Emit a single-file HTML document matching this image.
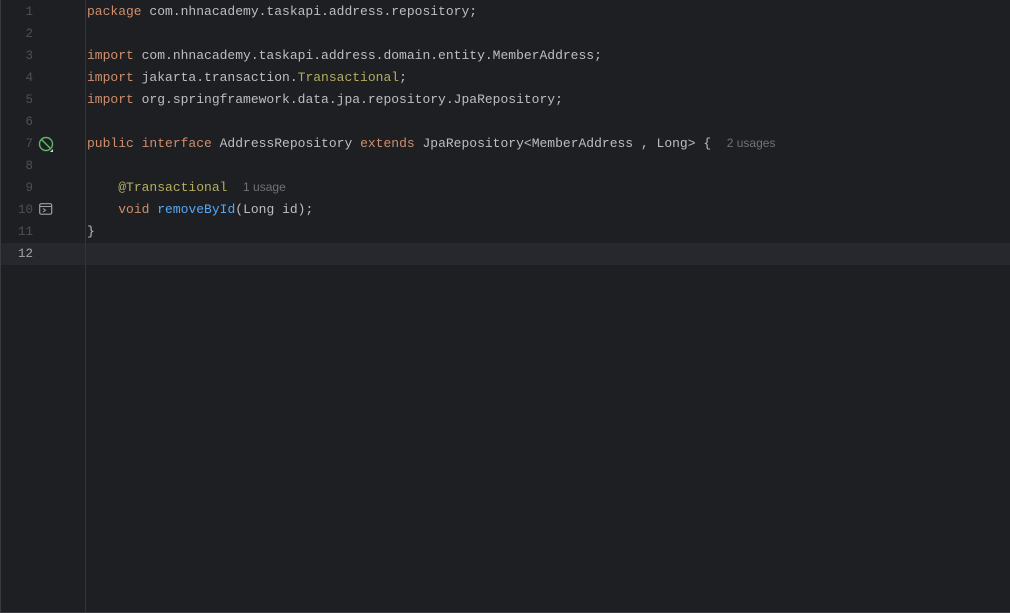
<!DOCTYPE html>
<html><head><style>
html,body{margin:0;padding:0;background:#1e1f22;width:1010px;height:613px;overflow:hidden}
.ed{position:relative;width:1010px;height:613px;background:#1e1f22;border-left:1px solid #393b40;box-sizing:border-box;border-bottom:1px solid #393b40}
.gut{position:absolute;left:84px;top:0;bottom:0;width:1px;background:#313438}
.cur{position:absolute;left:0;right:0;top:243px;height:22px;background:#26282e}
.ln{position:absolute;left:0;width:32px;text-align:right;font:12.5px "Liberation Mono",monospace;color:#4b5059;line-height:22px}
.code{position:absolute;left:86px;font:13px "Liberation Mono",monospace;color:#bcbec4;line-height:22px;white-space:pre}
.k{color:#cf8e6d}.a{color:#b3ae60}.f{color:#56a8f5}
.h{font:12px "Liberation Sans",sans-serif;color:#6f737a}
</style></head><body><div class="ed">
<div class="cur"></div><div class="gut"></div>
<div class="ln" style="top:1px">1</div>
<div class="ln" style="top:23px">2</div>
<div class="ln" style="top:45px">3</div>
<div class="ln" style="top:67px">4</div>
<div class="ln" style="top:89px">5</div>
<div class="ln" style="top:111px">6</div>
<div class="ln" style="top:133px">7</div>
<div class="ln" style="top:155px">8</div>
<div class="ln" style="top:177px">9</div>
<div class="ln" style="top:199px">10</div>
<div class="ln" style="top:221px">11</div>
<div class="ln" style="top:243px;color:#a1a3ab">12</div>
<svg style="position:absolute;left:37px;top:136px" width="17" height="17"><circle cx="8" cy="8" r="6.5" fill="none" stroke="#5fb865" stroke-width="1.4"/><line x1="3.5" y1="3.5" x2="12.5" y2="12.5" stroke="#5fb865" stroke-width="1.4"/><path d="M15 13v3h-3z" fill="#ddd"/></svg>
<svg style="position:absolute;left:38px;top:203px" width="14" height="13"><rect x="0.7" y="0.7" width="12" height="10.5" rx="1.5" fill="none" stroke="#9da0a8" stroke-width="1.2"/><line x1="1" y1="3.5" x2="12.5" y2="3.5" stroke="#9da0a8"/><path d="M4 5.5l2.5 1.8L4 9" fill="none" stroke="#9da0a8"/></svg>
<div class="code" style="top:1px"><span class="k">package</span> com.nhnacademy.taskapi.address.repository;</div>
<div class="code" style="top:45px"><span class="k">import</span> com.nhnacademy.taskapi.address.domain.entity.MemberAddress;</div>
<div class="code" style="top:67px"><span class="k">import</span> jakarta.transaction.<span class="a">Transactional</span>;</div>
<div class="code" style="top:89px"><span class="k">import</span> org.springframework.data.jpa.repository.JpaRepository;</div>
<div class="code" style="top:133px"><span class="k">public interface</span> AddressRepository <span class="k">extends</span> JpaRepository&lt;MemberAddress , Long&gt; {  <span class="h">2 usages</span></div>
<div class="code" style="top:177px">    <span class="a">@Transactional</span>  <span class="h">1 usage</span></div>
<div class="code" style="top:199px">    <span class="k">void</span> <span class="f">removeById</span>(Long id);</div>
<div class="code" style="top:221px">}</div>
</div></body></html>
